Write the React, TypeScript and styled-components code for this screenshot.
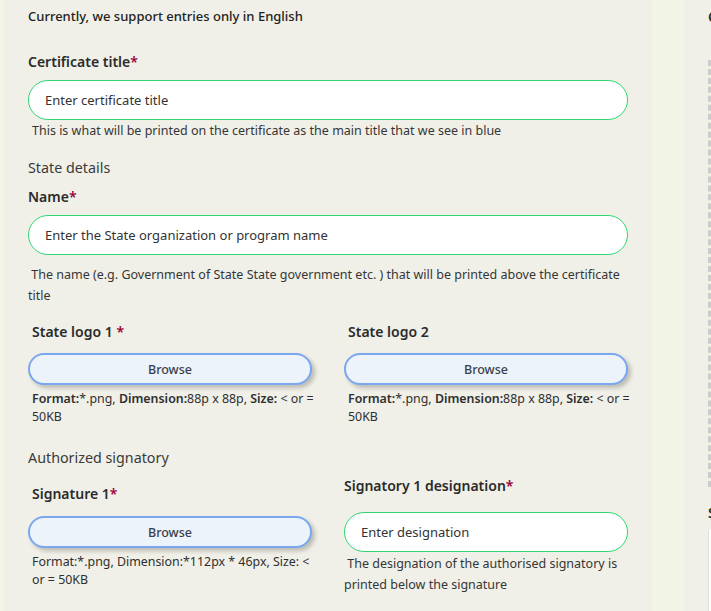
import styled, { createGlobalStyle } from 'styled-components';

const GlobalStyle = createGlobalStyle`
  html, body {
    margin: 0;
    padding: 0;
    background: #f0f0e8;
    font-family: 'Noto Sans', 'Open Sans', sans-serif;
    color: #2b2b2b;
  }
  * { box-sizing: border-box; }
`;

function Req() {
  return <Star>*</Star>;
}

function FormatNote({ bold, top }: { bold: boolean; top: number }) {
  if (!bold) {
    return (
      <Note $top={top}>
        Format:*.png, Dimension:*112px * 46px, Size: &lt; or = 50KB
      </Note>
    );
  }
  return (
    <Note $top={top} $wide>
      <b>Format:</b>*.png, <b>Dimension:</b>88p x 88p, <b>Size:</b> &lt; or&nbsp;=
      50KB
    </Note>
  );
}

export default function App() {
  return (
    <>
      <GlobalStyle />
      <Page>
        <EdgeStrip />
        <FormPanel>
          <Notice>Currently, we support entries only in English</Notice>

          <Label $top={27}>
            Certificate title
            <Req />
          </Label>
          <TextInput $top={8} placeholder="Enter certificate title" />
          <Help $top={2} $indent>
            This is what will be printed on the certificate as the main title
            that we see in blue
          </Help>

          <Section $top={18}>State details</Section>
          <Label $top={9}>
            Name
            <Req />
          </Label>
          <TextInput $top={8} placeholder="Enter the State organization or program name" />
          <Help $top={9} $lh={21}>
            &nbsp;The name (e.g. Government of State State government etc. ) that
            will be printed above the certificate title
          </Help>

          <Columns $top={16}>
            <Column>
              <SubLabel>
                State logo 1 <Req />
              </SubLabel>
              <BrowseButton $top={11}>Browse</BrowseButton>
              <FormatNote bold top={5} />
            </Column>
            <Column>
              <SubLabel>State logo 2</SubLabel>
              <BrowseButton $top={11}>Browse</BrowseButton>
              <FormatNote bold top={5} />
            </Column>
          </Columns>

          <Section $top={22}>Authorized signatory</Section>

          <Columns $top={0}>
            <Column>
              <SubLabel $top={16}>
                Signature 1<Req />
              </SubLabel>
              <BrowseButton $top={12}>Browse</BrowseButton>
              <FormatNote bold={false} top={5} />
            </Column>
            <Column>
              <SubLabel $top={8} $flush>
                Signatory 1 designation
                <Req />
              </SubLabel>
              <TextInput $top={16} placeholder="Enter designation" />
              <Help $top={1} $lh={21}>
                &nbsp;The designation of the authorised signatory is printed
                below the signature
              </Help>
            </Column>
          </Columns>
        </FormPanel>
        <Gutter />
        <PreviewPanel>
          <PreviewTitle>Certificate preview</PreviewTitle>
          <PreviewFrame />
          <PreviewTitle $top={16}>Sample</PreviewTitle>
          <PreviewCard />
        </PreviewPanel>
      </Page>
    </>
  );
}

const Page = styled.div`
  display: flex;
  width: 711px;
  height: 611px;
  overflow: hidden;
  background: #f0f0e8;
`;

const EdgeStrip = styled.div`
  flex: 0 0 4px;
  background: #f2f4e6;
`;

const FormPanel = styled.div`
  flex: 0 0 648px;
  padding: 7px 24px 0 24px;
  display: flex;
  flex-direction: column;
  background: #f0f0e8;
`;

const Gutter = styled.div`
  flex: 0 0 32px;
  background: #f2f5e6;
`;

const PreviewPanel = styled.div`
  flex: 0 0 400px;
  padding: 7px 0 0 24px;
  display: flex;
  flex-direction: column;
`;

const PreviewTitle = styled.div<{ $top?: number }>`
  flex-shrink: 0;
  margin-top: ${p => p.$top ?? 0}px;
  font-size: 14px;
  font-weight: 600;
  line-height: 20px;
  color: #2b2b2b;
`;

const PreviewFrame = styled.div`
  flex-shrink: 0;
  margin-top: 33px;
  height: 427px;
  border: 3px dashed #cccccc;
`;

const PreviewCard = styled.div`
  flex-shrink: 0;
  margin-top: 4px;
  height: 90px;
  background: #ffffff;
  border: 1px solid #e2e2da;
  border-radius: 4px;
`;

const Notice = styled.div`
  font-size: 13px;
  font-weight: 500;
  line-height: 18px;
  color: #222;
`;

const Label = styled.div<{ $top?: number }>`
  margin-top: ${p => p.$top ?? 0}px;
  font-size: 14px;
  font-weight: 600;
  line-height: 20px;
  color: #2b2b2b;
`;

const SubLabel = styled.div<{ $top?: number; $flush?: boolean }>`
  margin-top: ${p => p.$top ?? 0}px;
  padding-left: ${p => (p.$flush ? 0 : 4)}px;
  font-size: 14px;
  font-weight: 600;
  line-height: 20px;
  color: #2b2b2b;
`;

const Star = styled.span`
  color: #9b0038;
`;

const Section = styled.div<{ $top?: number }>`
  margin-top: ${p => p.$top ?? 0}px;
  font-size: 14.3px;
  line-height: 20px;
  color: #3a3a3a;
`;

const TextInput = styled.input<{ $top?: number }>`
  margin-top: ${p => p.$top ?? 0}px;
  width: 100%;
  height: 40px;
  padding: 0 16px;
  border: 1px solid #2fd672;
  border-radius: 20px;
  background: #ffffff;
  font-family: inherit;
  font-size: 13px;
  color: #333;
  outline: none;

  &::placeholder {
    color: #333;
    opacity: 1;
  }
`;

const Help = styled.div<{ $top?: number; $lh?: number; $indent?: boolean }>`
  margin-top: ${p => p.$top ?? 3}px;
  padding-left: ${p => (p.$indent ? 4 : 0)}px;
  font-size: 12.5px;
  line-height: ${p => p.$lh ?? 18}px;
  color: #363636;
`;

const Columns = styled.div<{ $top?: number }>`
  margin-top: ${p => p.$top ?? 0}px;
  display: grid;
  grid-template-columns: 284px 284px;
  column-gap: 32px;
`;

const Column = styled.div`
  display: flex;
  flex-direction: column;
`;

const BrowseButton = styled.button<{ $top?: number }>`
  margin-top: ${p => p.$top ?? 0}px;
  height: 32px;
  width: 100%;
  border: 2px solid #7aa7ee;
  border-radius: 16px;
  background: #edf3fb;
  box-shadow: 3px 3px 4px rgba(0, 0, 0, 0.22);
  font-family: inherit;
  font-size: 12.5px;
  font-weight: 500;
  color: #3a3f4a;
  cursor: pointer;
`;

const Note = styled.div<{ $top?: number; $wide?: boolean }>`
  margin-top: ${p => p.$top ?? 4}px;
  margin-right: ${p => (p.$wide ? -12 : 0)}px;
  padding-left: 4px;
  font-size: 12.4px;
  line-height: 18px;
  color: #2f2f2f;

  b {
    font-weight: 600;
  }
`;
